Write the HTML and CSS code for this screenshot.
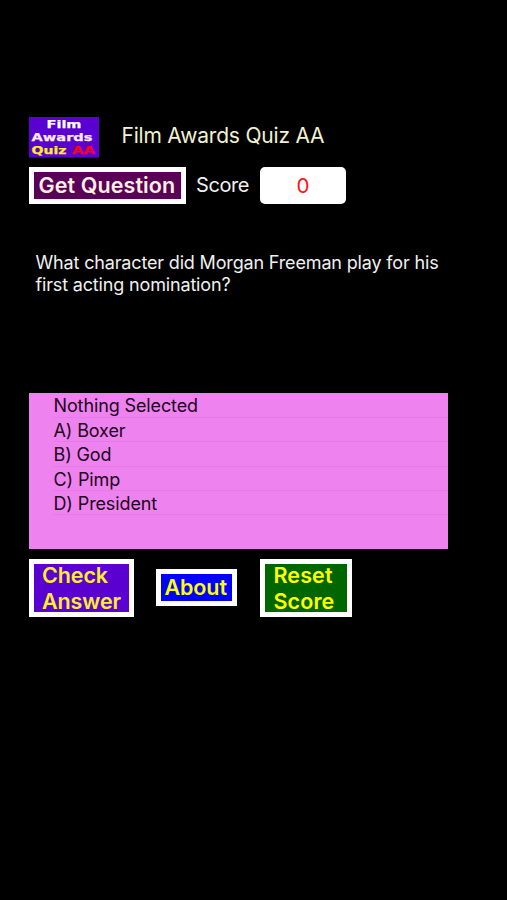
FILE: index.html
```html
<!DOCTYPE html>
<html lang="en">
<head>
<meta charset="utf-8">
<title>Film Awards Quiz AA</title>
<link rel="stylesheet" href="styles.css">
</head>
<body>
<main class="app">
  <header class="header">
    <svg class="logo" viewBox="0 0 70 41" role="img">
      <rect width="70" height="40.5" fill="#5a00d0"/>
      <g class="logo-text">
        <text x="17.5" y="11" textLength="35" lengthAdjust="spacingAndGlyphs" fill="#fff" stroke="#fff">Film</text>
        <text x="2.5" y="23.5" textLength="61" lengthAdjust="spacingAndGlyphs" fill="#ffe9e9" stroke="#ffe9e9">Awards</text>
        <text x="2.5" y="36.5" textLength="35" lengthAdjust="spacingAndGlyphs" fill="#ffef20" stroke="#ffef20">Quiz</text>
        <text x="43" y="36.5" textLength="23" lengthAdjust="spacingAndGlyphs" fill="#ff0010" stroke="#ff0010">AA</text>
      </g>
    </svg>
    <h1 class="title">Film Awards Quiz AA</h1>
  </header>
  <div class="score-row">
    <button class="btn get">Get Question</button>
    <span class="score-label">Score</span>
    <output class="score">0</output>
  </div>
  <p class="question">What character did Morgan Freeman play for his<br>first acting nomination?</p>
  <ul class="answers">
    <li>Nothing Selected</li>
    <li>A) Boxer</li>
    <li>B) God</li>
    <li>C) Pimp</li>
    <li>D) President</li>
  </ul>
  <div class="actions">
    <button class="btn check"><span class="two-line">Check<br>Answer</span></button>
    <button class="btn about">About</button>
    <button class="btn reset"><span class="two-line">Reset<br>Score</span></button>
  </div>
</main>
</body>
</html>
```
FILE: styles.css
```css
* { box-sizing: border-box; }
body {
  margin: 0;
  min-height: 900px;
  background: #000;
  color: #f0f0f0;
  font-family: Inter, "Liberation Sans", sans-serif;
}
.app { padding: 117px 59px 0 29px; }
.header { display: flex; height: 41px; }
.logo { width: 70px; height: 41px; flex: none; }
.logo-text { font: bold 11px "DejaVu Sans", sans-serif; stroke-width: 0.25px; }
.title {
  margin: 0 0 0 22.5px;
  font-size: 21px;
  line-height: 37px;
  font-weight: 400;
  letter-spacing: -0.2px;
  color: #f2f2d2;
  white-space: nowrap;
}
.score-row { display: flex; height: 37px; margin-top: 9px; }
.btn {
  border: 5px solid #fff;
  padding: 0;
  font: 600 21.5px/26px Inter, sans-serif;
  text-align: left;
  white-space: nowrap;
  color: #ff0;
  letter-spacing: -0.1px;
}
.two-line { display: block; margin: -2px 0; }
.get { width: 157px; padding: 0 0 1px 4.5px; background: #5a0059; color: #fff0e0; letter-spacing: 0.1px; }
.score-label { width: 64px; margin-left: 10px; font-size: 20px; line-height: 37px; letter-spacing: -0.4px; }
.score {
  width: 86px;
  border-radius: 5px;
  background: #fff;
  color: #f11;
  font-size: 20.5px;
  line-height: 38px;
  text-align: center;
}
.question {
  height: 141px;
  margin: 48px 0 0 6.5px;
  font-size: 18px;
  line-height: 22px;
  letter-spacing: -0.16px;
  white-space: nowrap;
}
.answers {
  height: 156px;
  margin: 0;
  padding: 0.4px 0 0 24.5px;
  list-style: none;
  background: #ee82ee;
  color: #200420;
  font-size: 18px;
  line-height: 26px;
  letter-spacing: -0.12px;
}
.answers li { height: 24.4px; border-bottom: 1px solid #e47be6; }
.actions { display: flex; align-items: center; height: 58px; margin-top: 10px; }
.check { width: 105px; height: 58px; padding-left: 8px; background: #5a00d0; color: #ffed30; }
.about { width: 81px; height: 37px; margin: 0 0 2px 22px; padding-left: 3.5px; background: #00f; }
.reset { width: 92px; height: 58px; margin-left: 23px; padding-left: 8.5px; background: #060; letter-spacing: 0.1px; }
```
